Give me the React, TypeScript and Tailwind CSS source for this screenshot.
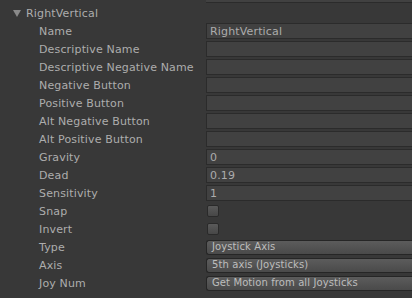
import React from 'react';

type Row =
    | { label: string; kind: 'text'; value?: string }
    | { label: string; kind: 'check' }
    | { label: string; kind: 'popup'; value: string };

const rows: Row[] = [
    { label: 'Name', kind: 'text', value: 'RightVertical' },
    { label: 'Descriptive Name', kind: 'text' },
    { label: 'Descriptive Negative Name', kind: 'text' },
    { label: 'Negative Button', kind: 'text' },
    { label: 'Positive Button', kind: 'text' },
    { label: 'Alt Negative Button', kind: 'text' },
    { label: 'Alt Positive Button', kind: 'text' },
    { label: 'Gravity', kind: 'text', value: '0' },
    { label: 'Dead', kind: 'text', value: '0.19' },
    { label: 'Sensitivity', kind: 'text', value: '1' },
    { label: 'Snap', kind: 'check' },
    { label: 'Invert', kind: 'check' },
    { label: 'Type', kind: 'popup', value: 'Joystick Axis' },
    { label: 'Axis', kind: 'popup', value: '5th axis (Joysticks)' },
    { label: 'Joy Num', kind: 'popup', value: 'Get Motion from all Joysticks' },
];

function Field({ row }: { row: Row }) {
    if (row.kind === 'check') {
        return (
            <div className="pl-[1px] flex items-center h-full">
                <div className="w-[12px] h-[12px] rounded-[2px] border border-[#2a2a2a] bg-gradient-to-b from-[#5a5a5a] to-[#474747]" />
            </div>
        );
    }
    if (row.kind === 'popup') {
        return (
            <div className="flex items-center h-full">
                <div className="h-[15px] w-full rounded-l-[3px] border border-[#262626] border-r-0 bg-gradient-to-b from-[#5c5c5c] to-[#4a4a4a] pl-[5px] flex items-center text-[10px] text-[#bdbdbd] tracking-[0.1px]">
                    {row.value}
                </div>
            </div>
        );
    }
    return (
        <div className="flex items-center h-full">
            <div className="h-[16px] w-full border border-[#2b2b2b] border-r-0 bg-[#414141] pl-[3px] flex items-center text-[#acacac] tracking-[0.15px]">
                {row.value}
            </div>
        </div>
    );
}

export default function App() {
    return (
        <div
            className="w-[412px] h-[298px] overflow-hidden bg-[#383838] text-[11px] leading-none text-[#adadad]"
            style={{ fontFamily: '"DejaVu Sans", Verdana, sans-serif' }}
        >
            {/* tail of previous entry */}
            <div className="h-[4px] flex">
                <div className="w-[206px]" />
                <div className="flex-1 h-[3px] bg-[#414141] border-b border-[#2b2b2b]" />
            </div>

            {/* foldout header */}
            <div className="h-[18px] flex items-center pl-[13px] gap-[5px]">
                <svg width="8" height="7" viewBox="0 0 8 7">
                    <path d="M0 0 H8 L4 7 Z" fill="#8a8a8a" />
                </svg>
                <span className="tracking-[0.15px]">RightVertical</span>
            </div>

            {rows.map((row) => (
                <div key={row.label} className="h-[18px] flex">
                    <div className="w-[206px] pl-[39px] flex items-center tracking-[0.15px] whitespace-nowrap">
                        {row.label}
                    </div>
                    <div className="flex-1">
                        <Field row={row} />
                    </div>
                </div>
            ))}
        </div>
    );
}
